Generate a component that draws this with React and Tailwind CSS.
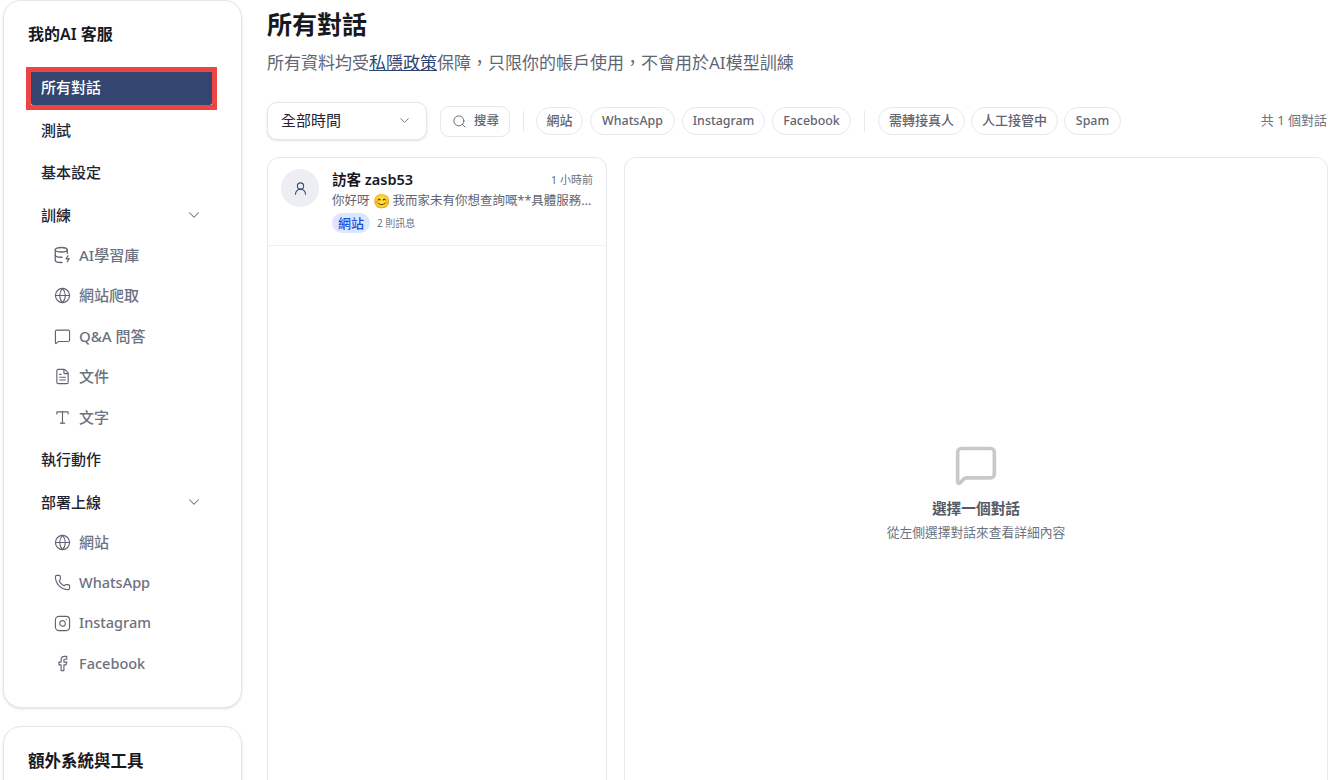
import React from "react";
import {
  ChevronDown,
  Facebook,
  FileText,
  Globe,
  Instagram,
  MessageSquare,
  Phone,
  Search,
  Type,
  UserRound,
} from "lucide-react";

const font = { fontFamily: '"Noto Sans", "Noto Sans CJK TC", sans-serif' };

function DbIcon() {
  return (
    <svg width="18" height="18" viewBox="0 0 24 24" fill="none" stroke="currentColor" strokeWidth="1.7" strokeLinecap="round" strokeLinejoin="round">
      <ellipse cx="11" cy="5" rx="8" ry="3" />
      <path d="M3 5v14c0 1.7 3.6 3 8 3h1" />
      <path d="M3 12c0 1.7 3.6 3 8 3h1" />
      <path d="M19 5v5" />
      <path d="M20 13l-2.5 4h4L19 21" />
    </svg>
  );
}

function MainItem({ label, active, open }) {
  if (active) {
    return (
      <div className="-mx-[5px] -mt-[4px] -mb-[6px] border-[5px] border-[#ef4444] bg-white">
        <div className="flex h-[33px] items-center rounded-b-[2px] bg-[#34466f] px-[10px] pb-[2px] text-[15px] font-medium text-white">
          {label}
        </div>
      </div>
    );
  }
  return (
    <div className="flex h-[33px] items-center justify-between px-[10px] text-[15px] font-medium text-[#1f2430]">
      <span>{label}</span>
      {open && <ChevronDown size={18} strokeWidth={1.4} className="-mr-px text-[#6b7280]" />}
    </div>
  );
}

function SubItem({ icon, label, latin }) {
  return (
    <div className={`flex h-[33px] items-center gap-[8px] pl-[22px] font-medium text-[#6b7280] ${latin ? "text-[14.5px]" : "text-[15px]"}`}>
      <span className="flex w-[18px] justify-center text-[#5f6572]">{icon}</span>
      <span>{label}</span>
    </div>
  );
}

function Chip({ children, width, latin }) {
  return (
    <div className={`flex h-[28px] items-center justify-center rounded-full border border-[#e5e7eb] bg-white font-medium text-[#5f6572] ${width} ${latin ? "text-[12.4px]" : "text-[13px]"}`}>
      {children}
    </div>
  );
}

function Divider() {
  return <div className="mx-[6px] h-[21px] w-px bg-[#e5e7eb]" />;
}

function Sidebar() {
  return (
    <aside className="flex w-[239px] shrink-0 flex-col gap-[18px]">
      <div className="h-[708px] shrink-0 rounded-[18px] border border-[#e5e7eb] bg-white pt-[21px] shadow-sm">
        <h2 className="pl-[24px] text-[16px] leading-[24px] font-semibold text-[#17191f]">我的AI 客服</h2>
        <nav className="mt-[25px] flex w-[208px] flex-col pl-[27px]">
          <div className="flex flex-col gap-[9.5px]">
            <MainItem label="所有對話" active />
            <MainItem label="測試" />
            <MainItem label="基本設定" />
            <MainItem label="訓練" open />
          </div>
          <div className="mt-[7px] flex flex-col gap-[7.5px]">
            <SubItem icon={<DbIcon />} label="AI學習庫" />
            <SubItem icon={<Globe size={17} strokeWidth={1.6} />} label="網站爬取" />
            <SubItem icon={<MessageSquare size={17} strokeWidth={1.6} />} label="Q&A 問答" />
            <SubItem icon={<FileText size={17} strokeWidth={1.6} />} label="文件" />
            <SubItem icon={<Type size={17} strokeWidth={1.6} />} label="文字" />
          </div>
          <div className="mt-[9px] flex flex-col gap-[10px]">
            <MainItem label="執行動作" />
            <MainItem label="部署上線" open />
          </div>
          <div className="mt-[7px] flex flex-col gap-[7.5px]">
            <SubItem icon={<Globe size={17} strokeWidth={1.6} />} label="網站" />
            <SubItem icon={<Phone size={17} strokeWidth={1.6} />} label="WhatsApp" latin />
            <SubItem icon={<Instagram size={17} strokeWidth={1.6} />} label="Instagram" latin />
            <SubItem icon={<Facebook size={17} strokeWidth={1.6} />} label="Facebook" latin />
          </div>
        </nav>
      </div>
      <div className="h-[200px] shrink-0 rounded-[18px] border border-[#e5e7eb] bg-white pt-[22px] shadow-sm">
        <h2 className="pl-[24px] text-[16.5px] leading-[24px] font-semibold text-[#17191f]">額外系統與工具</h2>
      </div>
    </aside>
  );
}

function Toolbar() {
  return (
    <div className="mt-[26px] flex h-[38px] items-center">
      <div className="flex h-[38px] w-[160px] items-center justify-between rounded-[10px] border border-[#e5e7eb] bg-white pr-[14px] pb-[2px] pl-[13px] text-[15px] text-[#1f2430] shadow-sm">
        <span>全部時間</span>
        <ChevronDown size={15} strokeWidth={1.5} className="text-[#6b7280]" />
      </div>
      <div className="ml-[13px] flex h-[31px] w-[70px] items-center gap-[7px] rounded-[9px] border border-[#e5e7eb] bg-white pl-[11px] text-[12.5px] font-medium text-[#5f6572]">
        <Search size={15} strokeWidth={1.5} />
        <span>搜尋</span>
      </div>
      <div className="ml-[7px]"><Divider /></div>
      <div className="ml-[6px] flex items-center gap-[7px]">
        <Chip width="w-[47px]">網站</Chip>
        <Chip width="w-[85px]" latin>WhatsApp</Chip>
        <Chip width="w-[83px]" latin>Instagram</Chip>
        <Chip width="w-[79px]" latin>Facebook</Chip>
      </div>
      <div className="ml-[7px]"><Divider /></div>
      <div className="ml-[7px] flex items-center gap-[6px]">
        <Chip width="w-[87px]">需轉接真人</Chip>
        <Chip width="w-[87px]">人工接管中</Chip>
        <Chip width="w-[57px]" latin>Spam</Chip>
      </div>
      <span className="ml-auto pr-px text-[13px] text-[#6b7280]">共 1 個對話</span>
    </div>
  );
}

function ConversationList() {
  return (
    <div className="h-[670px] w-[340px] shrink-0 rounded-t-[12px] border border-[#e5e7eb] bg-white">
      <div className="flex h-[88px] gap-[13px] border-b border-[#f0f1f3] px-[13px] pt-[11px]">
        <div className="flex h-[38px] w-[38px] shrink-0 items-center justify-center rounded-full bg-[#eceef3] text-[#34466f]">
          <UserRound size={15} strokeWidth={1.7} />
        </div>
        <div className="min-w-0 flex-1">
          <div className="flex h-[22px] items-center justify-between">
            <span className="text-[14.5px] font-semibold text-[#17191f]">訪客 zasb53</span>
            <span className="text-[11px] text-[#6b7280]">1 小時前</span>
          </div>
          <p className="flex h-[20px] items-center gap-[3px] text-[12.5px] whitespace-nowrap text-[#5f6572]">
            <span>你好呀</span>
            <span className="text-[14px] leading-none">😊</span>
            <span>我而家未有你想查詢嘅**具體服務...</span>
          </p>
          <div className="mt-[2px] flex items-center gap-[7px]">
            <span className="rounded-full bg-[#dbe7fe] px-[6px] text-[13px] leading-[20px] font-medium text-[#1d4ed8]">網站</span>
            <span className="text-[10px] text-[#6b7280]">2 則訊息</span>
          </div>
        </div>
      </div>
    </div>
  );
}

function EmptyDetail() {
  return (
    <div className="flex h-[670px] min-w-0 flex-1 flex-col items-center justify-center rounded-t-[12px] border border-[#e5e7eb] bg-white">
      <MessageSquare size={44} strokeWidth={2} className="text-[#c9c9c9]" />
      <p className="mt-[10px] text-[14.7px] leading-[22px] font-semibold text-[#555a64]">選擇一個對話</p>
      <p className="mt-[4px] text-[12.75px] leading-[18px] text-[#6b7280]">從左側選擇對話來查看詳細內容</p>
    </div>
  );
}

export default function App() {
  return (
    <div style={font} className="flex h-[780px] gap-[25px] overflow-hidden bg-white pl-[3px]">
      <Sidebar />
      <main className="min-w-0 flex-1">
        <h1 className="mt-[7px] text-[25px] leading-[34px] font-semibold text-[#17191f]">所有對話</h1>
        <p className="mt-[9px] text-[17px] leading-[26px] text-[#5f6572]">
          所有資料均受<a className="text-[#2d4373] underline">私隱政策</a>保障，只限你的帳戶使用，不會用於AI模型訓練
        </p>
        <Toolbar />
        <div className="mt-[17px] flex gap-[17px]">
          <ConversationList />
          <EmptyDetail />
        </div>
      </main>
    </div>
  );
}
